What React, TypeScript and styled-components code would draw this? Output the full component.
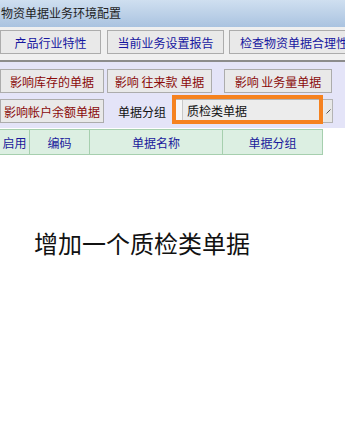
import React from "react";
import styled, { createGlobalStyle } from "styled-components";

const GlobalStyle = createGlobalStyle`
  body {
    margin: 0;
    background: #ffffff;
    font-family: "Noto Sans CJK SC", "Microsoft YaHei", sans-serif;
  }
`;

const Page = styled.div`
  width: 345px;
  height: 422px;
  overflow: hidden;
  background: #ffffff;
`;

const TitleBar = styled.div`
  height: 27px;
  line-height: 26px;
  padding-left: 1px;
  font-size: 12px;
  color: #1e1e1e;
  background: linear-gradient(#cfdff0, #aac3e0);
  white-space: nowrap;
`;

const Toolbar = styled.div`
  display: flex;
  height: 30px;
  padding-top: 3px;
  background: #f0f0f0;
  border-bottom: 2px solid #8c8c8c;
  white-space: nowrap;
`;

const Button = styled.button<{ $w: number; $ml?: number; $tone?: "blue" | "red" }>`
  all: unset;
  box-sizing: border-box;
  flex: none;
  width: ${({ $w }) => $w}px;
  height: 24px;
  margin-left: ${({ $ml = 0 }) => $ml}px;
  display: flex;
  align-items: center;
  justify-content: center;
  font-size: 12px;
  color: ${({ $tone }) => ($tone === "red" ? "#8a0a0a" : "#1616a0")};
  background: #e9e9e9;
  border: 1px solid #acacac;
  white-space: nowrap;
  overflow: hidden;
`;

const Panel = styled.div`
  background: #e4e4f8;
  padding: 7px 0 5px;
  display: flex;
  flex-direction: column;
  gap: 6px;
`;

const Row = styled.div`
  display: flex;
  align-items: center;
  height: 24px;
`;

const Label = styled.span`
  margin-left: 14px;
  font-size: 12px;
  color: #111;
  white-space: nowrap;
`;

const SelectWrap = styled.div`
  position: relative;
  margin-left: 9px;
  display: flex;
  height: 24px;
`;

const SelectBox = styled.div`
  box-sizing: border-box;
  width: 149px;
  height: 24px;
  display: flex;
  background: #ececec;
  border: 1px solid #b4b4b4;
  border-right: none;
`;

const SelectStrip = styled.div`
  width: 6px;
  background: #f6f6f6;
  border-right: 1px solid #c8c8c8;
`;

const SelectText = styled.div`
  padding-left: 4px;
  line-height: 22px;
  font-size: 12px;
  color: #111;
`;

const Arrow = styled.div`
  box-sizing: border-box;
  width: 9px;
  height: 24px;
  background: #e8e8e8;
  border: 1px solid #b4b4b4;
  border-left: none;
  display: flex;
  align-items: center;
  justify-content: center;
`;

const Highlight = styled.div`
  position: absolute;
  left: -3px;
  top: -4px;
  width: 151px;
  height: 29px;
  box-sizing: border-box;
  border: 4px solid #f5821f;
  pointer-events: none;
`;

const Table = styled.div`
  display: flex;
  margin-top: 1px;
  height: 26px;
`;

const HeadCell = styled.div<{ $w: number }>`
  box-sizing: border-box;
  width: ${({ $w }) => $w}px;
  flex: none;
  display: flex;
  align-items: center;
  justify-content: center;
  font-size: 12px;
  color: #1a1a9c;
  background: #dcefe2;
  border: 1px solid #a6cfae;
  border-left: none;
  &:first-child {
    border-left: none;
  }
`;

const Message = styled.div`
  padding: 73px 0 0 34px;
  font-size: 24px;
  line-height: 30px;
  color: #111;
  white-space: nowrap;
`;

const columns: Array<{ title: string; w: number }> = [
  { title: "启用", w: 30 },
  { title: "编码", w: 60 },
  { title: "单据名称", w: 133 },
  { title: "单据分组", w: 100 },
];

const App: React.FC = () => {
  return (
    <Page>
      <GlobalStyle />
      <TitleBar>物资单据业务环境配置</TitleBar>
      <Toolbar>
        <Button $w={101}>产品行业特性</Button>
        <Button $w={117} $ml={6}>当前业务设置报告</Button>
        <Button $w={130} $ml={5}>检查物资单据合理性</Button>
      </Toolbar>
      <Panel>
        <Row>
          <Button $w={104} $tone="red">影响库存的单据</Button>
          <Button $w={105} $ml={3} $tone="red">影响 往来款 单据</Button>
          <Button $w={108} $ml={12} $tone="red">影响 业务量单据</Button>
        </Row>
        <Row>
          <Button $w={104} $tone="red">影响帐户余额单据</Button>
          <Label>单据分组</Label>
          <SelectWrap>
            <SelectBox>
              <SelectStrip />
              <SelectText>质检类单据</SelectText>
            </SelectBox>
            <Arrow>
              <svg width="5" height="5" viewBox="0 0 5 5">
                <path d="M0.5 4.5 L4.5 0.5" stroke="#555" strokeWidth="1" />
              </svg>
            </Arrow>
            <Highlight />
          </SelectWrap>
        </Row>
      </Panel>
      <Table>
        {columns.map((c) => (
          <HeadCell key={c.title} $w={c.w}>
            {c.title}
          </HeadCell>
        ))}
      </Table>
      <Message>增加一个质检类单据</Message>
    </Page>
  );
};

export default App;
